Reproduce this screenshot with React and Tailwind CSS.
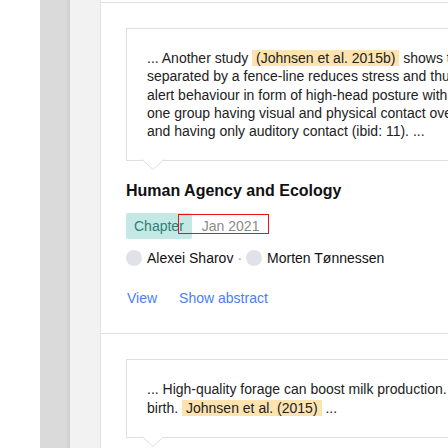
import React from "react";

const Mark = ({ children }) => (
  <span className="bg-[#fce3b0] px-[4px]">{children}</span>
);

const Quote = ({ children }) => (
  <div className="relative ml-[25px] w-[520px] border border-[#dedede] bg-white px-[20px] py-[20px]">
    <div className="whitespace-nowrap text-[14px] leading-[18.25px] text-[#222]">{children}</div>
    {/* caret */}
    <svg className="absolute left-[15px] top-full -mt-px" width="22" height="11" viewBox="0 0 22 11">
      <path d="M0 0.5 L11 10.5 L22 0.5" fill="#fff" stroke="#dedede" strokeWidth="1" />
      <rect x="1" y="0" width="20" height="1" fill="#fff" />
    </svg>
  </div>
);

const Avatar = () => <span className="inline-block h-[16px] w-[16px] rounded-full bg-[#e1e1ea]" />;

export default function App() {
  return (
    <div
      className="flex h-[448px] w-[448px] overflow-hidden bg-white"
      style={{ fontFamily: '"Liberation Sans", Arial, sans-serif' }}
    >
      <div className="w-[40px] shrink-0 bg-white" />
      <div className="w-[30px] shrink-0 bg-gradient-to-r from-[#dadada] from-[85%] to-[#cfcfcf]" />
      <div className="w-[31px] shrink-0 border-r border-[#e2e2e2] bg-[#f2f2f2]" />
      <div className="min-w-0 flex-1">
        <div className="h-[2px]" />
        <div className="border-t border-[#e0e0e0] pt-[25px] pb-[26px]">
          <Quote>
            ... Another study <Mark>(Johnsen et al. 2015b)</Mark> shows that cattle
            <br />
            separated by a fence-line reduces stress and thus lower
            <br />
            alert behaviour in form of high-head posture with the
            <br />
            one group having visual and physical contact over the fence
            <br />
            and having only auditory contact (ibid: 11). ...
          </Quote>
          <div className="ml-[25px] mt-[21px] text-[16px] font-bold leading-[18px] text-[#111]">
            Human Agency and Ecology
          </div>
          <div className="ml-[25px] mt-[13px] flex items-center gap-[10px] text-[14px]">
            <span className="flex h-[26px] items-center rounded-[2px] bg-[#c4e8e4] px-[8px] text-[#2c7f7a]">
              Chapter
            </span>
            <span className="relative text-[#8a8a8a]">
              Jan 2021
              <span className="absolute -left-[24px] -top-[2px] h-[20px] w-[91px] border border-[#e8141c]" />
            </span>
          </div>
          <div className="ml-[25px] mt-[11px] flex items-center text-[14px] leading-[16px] text-[#111]">
            <Avatar />
            <span className="ml-[5px]">Alexei Sharov</span>
            <span className="mx-[4px] text-[#999]">·</span>
            <Avatar />
            <span className="ml-[5px]">Morten Tønnessen</span>
          </div>
          <div className="ml-[26px] mt-[23px] flex gap-[22px] text-[14px] leading-[18px] text-[#4a7ef7]">
            <span>View</span>
            <span>Show abstract</span>
          </div>
        </div>
        <div className="border-t border-[#e0e0e0] pt-[25px]">
          <Quote>
            ... High-quality forage can boost milk production. Cows that
            <br />
            birth. <Mark>Johnsen et al. (2015)</Mark> ...
          </Quote>
        </div>
      </div>
    </div>
  );
}
